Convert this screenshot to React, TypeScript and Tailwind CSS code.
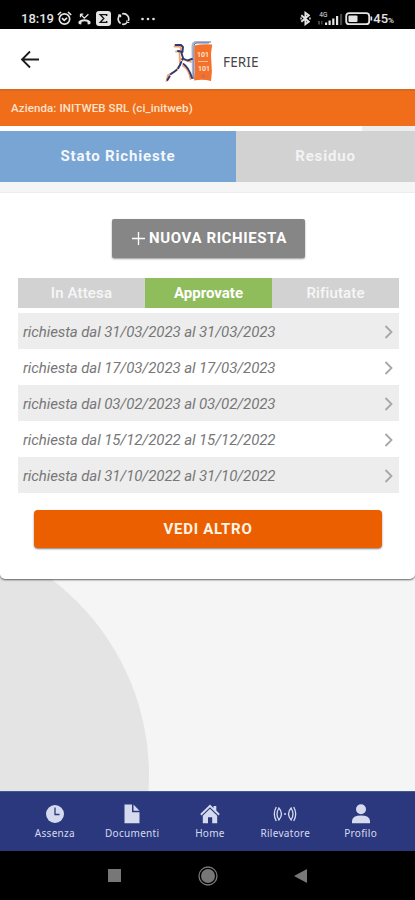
import React, { useState } from 'react';

const mainTabs = ['Stato Richieste', 'Residuo'];

const statusTabs = ['In Attesa', 'Approvate', 'Rifiutate'];

const requests = [
  { from: '31/03/2023', to: '31/03/2023' },
  { from: '17/03/2023', to: '17/03/2023' },
  { from: '03/02/2023', to: '03/02/2023' },
  { from: '15/12/2022', to: '15/12/2022' },
  { from: '31/10/2022', to: '31/10/2022' },
];

const StatusBar = () => (
  <div className="h-[29px] shrink-0 bg-black text-[#e4e4e4] flex items-center justify-between pl-[21px] pr-[21px] pt-[8px]">
    <div className="flex items-center">
      <span className="w-[34px] text-[13px] leading-none font-medium whitespace-nowrap">18:19</span>
      {/* Alarm */}
      <svg className="ml-[2px]" width="15" height="15" viewBox="0 0 15 15" fill="none" stroke="currentColor" strokeWidth="1.7">
        <circle cx="7.5" cy="8" r="5.2" />
        <path d="M.8 4 4 1M14.2 4 11 1M5 7.2l2.2 2.2L10 6.8" />
      </svg>
      {/* Missed call */}
      <svg className="ml-[6px]" width="13" height="12" viewBox="0 0 13 12" fill="none" stroke="currentColor">
        <path d="M2.5 1v3.2M2.3 1.2h3M2.6 1.4 6.3 5.2 10.4 1.2" strokeWidth="1.3" />
        <path d="M1 9.8C3.5 6.5 9.5 6.5 12 9.8" strokeWidth="2" />
        <path d="M.8 9.8l2.6.4M12.2 9.8l-2.6.4" strokeWidth="2.4" />
      </svg>
      {/* Sigma badge */}
      <svg className="ml-[5px]" width="15" height="15" viewBox="0 0 15 15">
        <rect width="15" height="15" rx="3" fill="currentColor" />
        <path d="M10.7 5V3.6H4.3l3.5 3.9-3.5 3.9h6.4V10" fill="none" stroke="#111" strokeWidth="1.4" />
      </svg>
      {/* Sync */}
      <svg className="ml-[6px]" width="13" height="14" viewBox="0 0 13 14" fill="none" stroke="currentColor" strokeWidth="1.7">
        <path d="M3.6 11.500A5.300 5.300 0 0 1 3 3M5.200 1.800A5.300 5.300 0 0 1 11.300 9M9.600 11.200A5.300 5.300 0 0 1 5.200 12.200" />
        <path d="M1 3h2.600v2.200M12.300 10.500H9.800V8.400" strokeWidth="1.200" />
      </svg>
      <svg className="ml-[11px]" width="14" height="4" viewBox="0 0 14 4" fill="currentColor">
        <circle cx="1.5" cy="2" r="1.3" />
        <circle cx="7" cy="2" r="1.3" />
        <circle cx="12.5" cy="2" r="1.3" />
      </svg>
    </div>

    <div className="flex items-center">
      {/* Bluetooth */}
      <svg className="mr-[1px]" width="11" height="15" viewBox="0 0 11 15" fill="none" stroke="currentColor" strokeWidth="1.9">
        <path d="M1.3 4.2 8.8 10.7 5.4 13.2V1.8L8.8 4.3 1.3 10.8" />
        <path d="M.3 7.5h1.5M9.2 7.5h1.5" />
      </svg>
      {/* Signal */}
      <div className="relative ml-[6px] w-[25px] h-[15px]">
        <span className="absolute left-[1px] top-[1px] text-[6.5px] leading-none">4G</span>
        <svg className="absolute inset-0" width="25" height="15" viewBox="0 0 25 15" fill="currentColor">
          <path d="M7 11.500h2.200V14H7zM10.500 9.500h2.200V14h-2.200zM14.200 7.500h2.200V14h-2.200zM18 5h2.200v9H18z" />
          <path d="M22 3h2.200v11H22zM0 10h2v3.500H0zM3 10h1.500v3.500H3z" opacity=".3" />
        </svg>
      </div>
      {/* Battery */}
      <svg className="ml-[2px]" width="28" height="14" viewBox="0 0 28 14">
        <rect x="1.200" y="1.200" width="23" height="11" rx="3" fill="none" stroke="currentColor" strokeWidth="1.800" />
        <rect x="3.500" y="3.500" width="9" height="6.500" rx="1" fill="currentColor" />
        <path d="M25.500 4.500h1.700v4h-1.700z" fill="currentColor" />
      </svg>
      <span className="text-[13px] leading-none font-medium whitespace-nowrap">
        45<span className="text-[8px]">%</span>
      </span>
    </div>
  </div>
);

// Running man pushing the orange badge
const Logo = () => (
  <svg width="50" height="44" viewBox="0 0 50 44" fill="none">
    <path d="M28 39 27.500 6q.3-4 4-4H46" stroke="#a9b3cc" strokeWidth="2" />
    <path d="M29 39V6q0-3 3-3h12" stroke="#40558f" strokeWidth=".8" />
    <path d="M29.500 5.500q8-2 17.700-1-2 9-.8 18 1.200 10-.4 18.500-8-2-17-.5 1.500-9 .8-17Q29 14 29.500 5.500z" fill="#f4712c" />
    <g fill="#fde0cd" fontFamily="Roboto, sans-serif" fontWeight="700" textAnchor="middle">
      <text x="38" y="17" fontSize="7">101</text>
      <text x="39" y="31" fontSize="7">101</text>
    </g>
    <path d="M33 21.500h10" stroke="#fbd0b5" strokeWidth=".8" />
    <circle cx="38.500" cy="36" r="1.500" fill="#bd6f68" />
    <g stroke="#f5a16c" strokeWidth="1.800" strokeLinecap="round" strokeLinejoin="round">
      <path d="M9.500 6.500h5.500q2 2 0 5h-4" />
      <path d="M14.500 13.500 15 25 10 31.500 3 35 1.500 41M16 19l10 3" />
      <path d="M18 26q6 3 7.500 13" />
    </g>
    <g stroke="#2c3a74" strokeWidth="1.900" strokeLinecap="round" strokeLinejoin="round">
      <path d="M10.500 5h5.500l2 2-.5 5-4.500-1" />
      <path d="M16.500 13 18 18l-2.500 6-3 5.500-6.500 4.500-3.500 6" strokeDasharray="7 2.500" />
      <path d="M18 18.500 22.500 20.500 27 19M18.500 24q5 3 8.500 14" />
    </g>
  </svg>
);

const Header = () => (
  <header className="h-[60px] shrink-0 bg-white flex items-center">
    <svg className="ml-[20px]" width="20" height="20" viewBox="0 0 20 20" fill="none" stroke="#1c1c1c" strokeWidth="1.800">
      <path d="M19 10.500H2.200M10 2.500l-8 8 8 8" />
    </svg>
    <div className="ml-[125px] mt-[6px]">
      <Logo />
    </div>
    <h1 className="ml-[8px] mt-[7px] font-['Noto_Sans'] text-[13.5px] leading-none tracking-[0.15px] text-[#464646]">FERIE</h1>
  </header>
);

const BottomNav = () => (
  <nav className="h-[60px] shrink-0 bg-[#2b387d] border-t border-[#3d5b91] text-[#d5daef] flex pl-[16px] pr-[15px] pt-[11px] font-['Noto_Sans'] text-[10px] tracking-[0.3px]">
    <div className="w-[78px] flex flex-col items-center">
      <svg width="20" height="22" viewBox="0 0 20 22">
        <circle cx="10" cy="11" r="9" fill="currentColor" />
        <path d="M10 4.500v7h4.500" fill="none" stroke="#2b387d" strokeWidth="1.300" />
      </svg>
      <span className="mt-[1px] leading-[14px]">Assenza</span>
    </div>
    <div className="w-[77px] flex flex-col items-center">
      <svg width="18" height="22" viewBox="0 0 18 22" fill="currentColor">
        <path d="M1.500 1.500H9v7.800h7.500v11h-15zM10.500 1.500l6 6.300h-6z" />
      </svg>
      <span className="mt-[1px] leading-[14px]">Documenti</span>
    </div>
    <div className="w-[79px] flex flex-col items-center">
      <svg width="22" height="22" viewBox="0 0 22 22" fill="currentColor">
        <path d="m11 1.500 3.500 3.400V3h2.800v4.600l3.500 3.500-1.300 1.300L11 4.200l-8.500 8.200-1.300-1.300z" />
        <path d="m11 5.700 7.200 7v7.600h-5v-6H9v6H3.800v-7.600z" />
      </svg>
      <span className="mt-[1px] leading-[14px]">Home</span>
    </div>
    <div className="w-[72px] flex flex-col items-center">
      <svg width="24" height="22" viewBox="0 0 24 22" fill="none" stroke="currentColor" strokeWidth="1.300">
        <path d="M3.300 4q-4 7 0 14M6 5q-4 6 0 12M20.700 4q4 7 0 14M18 5q4 6 0 12" />
        <path d="M5.500 4.500q6 6.500 0 13M18.500 4.500q-6 6.500 0 13" />
        <circle cx="12" cy="11" r="1" fill="currentColor" stroke="none" />
      </svg>
      <span className="mt-[1px] leading-[14px]">Rilevatore</span>
    </div>
    <div className="w-[79px] flex flex-col items-center">
      <svg width="20" height="22" viewBox="0 0 20 22" fill="currentColor">
        <circle cx="10" cy="6.300" r="5" />
        <path d="M1 20.300v-2.500Q1.500 12.500 10 12.500t9 5.300v2.500z" />
      </svg>
      <span className="mt-[1px] leading-[14px]">Profilo</span>
    </div>
  </nav>
);

const SystemNav = () => (
  <div className="h-[49px] shrink-0 bg-black flex items-center pl-[108px] gap-[83px] text-[#777]">
    <div className="w-[13px] h-[13px] bg-[#777]" />
    <svg className="-ml-[6px]" width="20" height="20" viewBox="0 0 20 20">
      <circle cx="10" cy="10" r="9" fill="none" stroke="currentColor" strokeWidth="1.300" />
      <circle cx="10" cy="10" r="7" fill="currentColor" />
    </svg>
    <svg className="-ml-[7px]" width="13" height="14" viewBox="0 0 13 14">
      <path d="M13 0v14L0 7z" fill="currentColor" />
    </svg>
  </div>
);

export default function App() {
  const [mainTab, setMainTab] = useState('Stato Richieste');
  const [statusTab, setStatusTab] = useState('Approvate');

  return (
    <div className="w-[415px] h-[900px] overflow-hidden flex flex-col bg-[#f5f5f5] font-[Roboto,sans-serif]">
      <StatusBar />
      <Header />

      <div className="h-[37px] shrink-0 bg-[#f06d19] border-t-2 border-[#d9691f] flex items-center pl-[11px] text-[11.5px] font-medium tracking-[0.1px] text-[#fde3d0]">
        Azienda: INITWEB SRL (ci_initweb)
      </div>

      <main className="relative flex-1 overflow-hidden">
        <div className="absolute -left-[341px] top-[404px] w-[490px] h-[490px] rounded-full bg-[#e4e4e4]" />

        <div className="relative">
          <div className="h-[5px] bg-[#ededed]">
            <div className="w-[362px] h-full bg-white" />
          </div>

          {/* Main tabs */}
          <div className="flex h-[51px] text-[15px] font-bold tracking-[0.85px]">
            {mainTabs.map((tab) => (
              <button
                key={tab}
                onClick={() => setMainTab(tab)}
                className={
                  tab === mainTab
                    ? 'w-[236px] bg-[#78a5d3] text-[#f3f7fc]'
                    : 'flex-1 bg-[#d2d2d2] text-[#f3f3f3]'
                }
              >
                {tab}
              </button>
            ))}
          </div>

          {/* Requests card */}
          <section className="mt-[11px] h-[386px] bg-white rounded-b-[5px] shadow-[0_1px_2px_rgba(0,0,0,0.6)] px-[18px] pt-[26px]">
            <button className="ml-[94px] w-[193px] h-[39px] rounded-[2px] bg-[#868686] shadow-[0_1px_2px_rgba(0,0,0,0.4)] flex items-center justify-center gap-[4px] pl-[2px] text-white text-[15px] font-bold tracking-[0.6px] whitespace-nowrap">
              <svg width="13" height="13" viewBox="0 0 13 13" stroke="currentColor" strokeWidth="1.300">
                <path d="M6.500 0v13M0 6.500h13" />
              </svg>
              NUOVA RICHIESTA
            </button>

            <div className="mt-[20px] w-[381px] flex h-[30px] text-[15px] font-medium">
              {statusTabs.map((tab) => (
                <button
                  key={tab}
                  onClick={() => setStatusTab(tab)}
                  className={
                    tab === statusTab
                      ? 'flex-1 bg-[#8fbd5c] text-white font-bold'
                      : 'flex-1 bg-[#d2d2d2] text-[#f7f7f7] tracking-[0.15px]'
                  }
                >
                  {tab}
                </button>
              ))}
            </div>

            <ul className="mt-[5px] w-[381px]">
              {requests.map((request) => (
                <li
                  key={request.from}
                  className="h-[36px] odd:bg-[#ededed] flex items-center justify-between pt-[2px] pl-[5px] pr-[6px] text-[15px] tracking-[-0.1px] italic text-[#777777]"
                >
                  <span>richiesta dal {request.from} al {request.to}</span>
                  <svg width="9" height="14" viewBox="0 0 9 14" fill="none" stroke="#a6a6a6" strokeWidth="1.800">
                    <path d="m1.500 1 6 6-6 6" />
                  </svg>
                </li>
              ))}
            </ul>

            <button className="mt-[17px] ml-[16px] block w-[348px] h-[38px] rounded-[4px] bg-[#eb5f00] shadow-[0_1px_2px_rgba(0,0,0,0.5)] text-[#fff4e8] text-[15px] font-bold tracking-[0.7px]">
              VEDI ALTRO
            </button>
          </section>
        </div>
      </main>

      <BottomNav />
      <SystemNav />
    </div>
  );
}
